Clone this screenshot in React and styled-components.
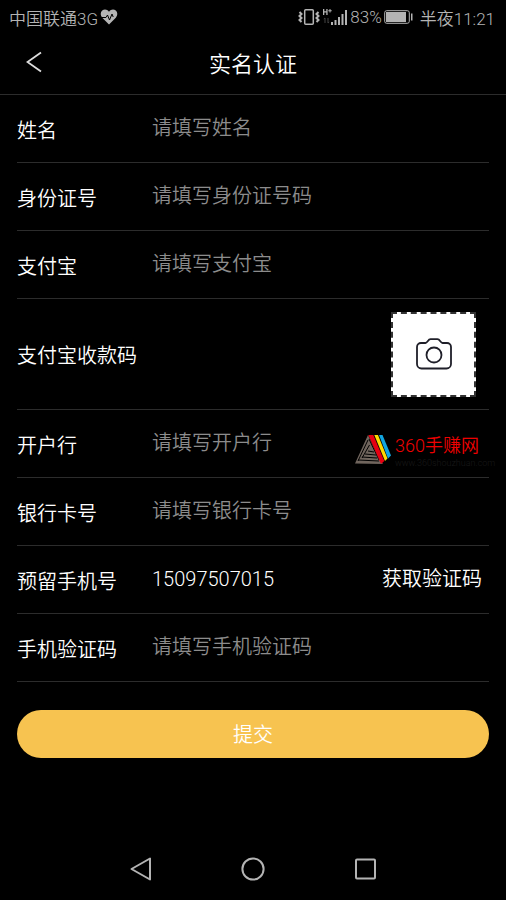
import React, { useState } from "react";
import styled, { createGlobalStyle } from "styled-components";

const FIELDS_BEFORE = [
  { id: "name", label: "姓名", placeholder: "请填写姓名" },
  { id: "idCard", label: "身份证号", placeholder: "请填写身份证号码" },
  { id: "alipay", label: "支付宝", placeholder: "请填写支付宝" },
];

const FIELDS_AFTER = [
  { id: "bank", label: "开户行", placeholder: "请填写开户行" },
  { id: "bankCard", label: "银行卡号", placeholder: "请填写银行卡号" },
  { id: "phone", label: "预留手机号", placeholder: "请填写手机号", action: "获取验证码" },
  { id: "code", label: "手机验证码", placeholder: "请填写手机验证码" },
];

const GlobalStyle = createGlobalStyle`
  *,
  *::before,
  *::after {
    box-sizing: border-box;
  }

  body {
    margin: 0;
    background-color: #000;
    color: #fff;
    font-family: Roboto, "Noto Sans CJK SC", sans-serif;
    font-weight: 350;
  }

  button,
  input {
    font: inherit;
    color: inherit;
    border: 0;
    padding: 0;
    background: none;
  }

  svg {
    display: block;
    flex-shrink: 0;
  }
`;

const HeartIcon = () => (
  <svg width="18" height="16" viewBox="0 0 18 16" fill="none">
    <path
      d="M9 15.5 2.2 8.7C.2 6.6.2 3.3 2.2 1.6 4.2 0 7.2.3 9 2.7 10.8.3 13.8 0 15.8 1.6c2 1.7 2 5 0 7.1z"
      fill="#b4b4b4"
    />
    <path d="M1 8.500h5l1.500-2.500 2 5 2.500-6 1.200 3" stroke="#000" />
  </svg>
);

const VibrateIcon = () => (
  <svg width="22" height="18" viewBox="0 0 22 18" fill="none" stroke="#b4b4b4">
    <rect x="6.7" y="1.7" width="8.600" height="14.600" rx="1" strokeWidth="1.500" />
    <path
      d="M1.500 4l2 2-2 2 2 2-2 2 2 2M20.500 4l-2 2 2 2-2 2 2 2-2 2"
      strokeWidth="2"
    />
  </svg>
);

const SignalIcon = () => (
  <svg width="26" height="18" viewBox="0 0 26 18" fill="#b4b4b4">
    <path d="M1 1h1.300v2.300h2V1h1.300v6H4.300V4.500h-2V7H1zM7.500 1h1v1.200h1.200v1H8.500v1.200h-1V3.200H6.300v-1h1.200z" />
    <path d="M3 10v5m-1.200-4L3 10M6 10v5m1.200-1L6 15" stroke="#444" fill="none" />
    <path d="M9 14h2v3H9zM12.500 12h2v5h-2zM16 9h2v8h-2zM19.500 6h2v11h-2zM23 2h2v15h-2z" />
  </svg>
);

const BatteryIcon = () => (
  <svg width="30" height="14" viewBox="0 0 30 14" fill="#b4b4b4">
    <rect x=".7" y=".7" width="24.600" height="12.600" rx="2" fill="none" stroke="#b4b4b4" />
    <path d="M2 2h20v10H2zM27 3.500h1.500v7H27z" />
  </svg>
);

const CameraIcon = () => (
  <svg width="38" height="34" viewBox="0 0 38 34" fill="none" stroke="#1f1f29" strokeWidth="1.800">
    <path
      d="M6 6h4.500c2 0 2.500-3.800 5-3.800h7c2.500 0 3 3.800 5 3.800H32a4 4 0 0 1 4 4v17a4.500 4.500 0 0 1-4.500 4.500h-25A4.500 4.500 0 0 1 2 27V10a4 4 0 0 1 4-4z"
      strokeLinejoin="round"
    />
    <circle cx="19" cy="18" r="7.500" />
  </svg>
);

const WatermarkLogo = () => (
  <svg width="37" height="32" viewBox="0 0 37 32">
    <path d="M13 2 24 26 28 31 0 30.500z" fill="#70655d" />
    <path
      d="M13 7 3 28M14.500 12 7 25M3 27l21 1M7 24l15 1M10 21l11 1M13 18l6 1M14 6l10 21"
      stroke="#000"
      fill="none"
    />
    <path d="M13.300 2h5l11 26-3.300 3z" fill="#e60012" />
    <path d="M19.300 2h3.700l9.500 23.500-2.500 2.500z" fill="#ffd900" />
    <path d="M24 2h3.500l8.500 20.500-3 3z" fill="#12a5e0" />
  </svg>
);

const StatusBar = () => (
  <StatusWrapper>
    <StatusGroup>
      中国联通3G
      <HeartIcon />
    </StatusGroup>
    <StatusGroup>
      <VibrateIcon />
      <SignalIcon />
      <span>83%</span>
      <BatteryIcon />
      <Clock>半夜11:21</Clock>
    </StatusGroup>
  </StatusWrapper>
);

const Field = ({ field, value, onChange }) => (
  <Row>
    <Label htmlFor={field.id}>{field.label}</Label>
    <Input
      id={field.id}
      value={value}
      placeholder={field.placeholder}
      onChange={(e) => onChange(field.id, e.target.value)}
    />
    {field.action && <CodeButton type="button">{field.action}</CodeButton>}
  </Row>
);

const App = () => {
  const [values, setValues] = useState({ phone: "15097507015" });

  const handleChange = (id, value) => setValues((prev) => ({ ...prev, [id]: value }));

  const renderField = (field) => (
    <Field key={field.id} field={field} value={values[field.id] || ""} onChange={handleChange} />
  );

  return (
    <Page>
      <GlobalStyle />
      <StatusBar />
      <Header>
        <BackButton type="button" aria-label="返回">
          <svg width="16" height="22" viewBox="0 0 16 22" fill="none" stroke="#ddd">
            <path d="M15 1.500 1.500 11 15 20.500" strokeWidth="1.800" />
          </svg>
        </BackButton>
        <Title>实名认证</Title>
      </Header>
      <Form onSubmit={(e) => e.preventDefault()}>
        {FIELDS_BEFORE.map(renderField)}
        <UploadRow>
          <span id="qrcode-label">支付宝收款码</span>
          <UploadButton type="button" aria-labelledby="qrcode-label">
            <CameraIcon />
          </UploadButton>
        </UploadRow>
        {FIELDS_AFTER.map(renderField)}
        <SubmitButton type="submit">提交</SubmitButton>
        <Watermark>
          <WatermarkLogo />
          <WatermarkText>
            <WatermarkName>360手赚网</WatermarkName>
            <WatermarkUrl>www.360shouzhuan.com</WatermarkUrl>
          </WatermarkText>
        </Watermark>
      </Form>
      <NavBar>
        <NavButton type="button" aria-label="后退">
          <svg width="24" height="26" viewBox="0 0 24 26" fill="none" stroke="#b4b4b4">
            <path d="M21 2.500v21L2.500 13z" strokeWidth="2" strokeLinejoin="round" />
          </svg>
        </NavButton>
        <NavButton type="button" aria-label="主页">
          <svg width="24" height="24" viewBox="0 0 24 24" fill="none" stroke="#b4b4b4">
            <circle cx="12" cy="12" r="10.600" strokeWidth="2" />
          </svg>
        </NavButton>
        <NavButton type="button" aria-label="最近任务">
          <svg width="24" height="24" viewBox="0 0 24 24" fill="none" stroke="#b4b4b4">
            <rect x="3" y="2.500" width="19" height="19" rx="1" strokeWidth="2" />
          </svg>
        </NavButton>
      </NavBar>
    </Page>
  );
};

const Page = styled.div`
  display: flex;
  flex-direction: column;
  min-height: 100vh;
`;

const StatusWrapper = styled.div`
  display: flex;
  justify-content: space-between;
  align-items: center;
  height: 34px;
  padding: 0 11px 0 9px;
  font-size: 17px;
  color: #b4b4b4;
`;

const StatusGroup = styled.div`
  display: flex;
  align-items: center;
  gap: 2px;
`;

const Clock = styled.span`
  margin-left: 4px;
`;

const Header = styled.header`
  display: grid;
  grid-template-columns: 52px 1fr 52px;
  align-items: center;
  height: 61px;
  padding-bottom: 4px;
  border-bottom: 1px solid #2c2c2c;
`;

const BackButton = styled.button`
  padding: 0 10px 0 26px;
`;

const Title = styled.h1`
  margin: 0;
  font-size: 22px;
  font-weight: inherit;
  text-align: center;
`;

const Form = styled.form`
  position: relative;
  flex: 1;
  padding: 0 17px;
  font-size: 20px;
`;

const Row = styled.div`
  display: flex;
  align-items: center;
  height: 68px;
  padding-bottom: 2px;
  border-bottom: 1px solid #2c2c2c;
`;

const UploadRow = styled(Row)`
  justify-content: space-between;
  height: 111px;
  padding: 0 13px 0 0;
`;

const Label = styled.label`
  min-width: 135px;
  padding-top: 4px;
`;

const Input = styled.input`
  flex: 1;
  min-width: 0;
  height: 40px;
  outline: none;

  &::placeholder {
    color: #8c8c8c;
    opacity: 1;
  }
`;

const CodeButton = styled.button`
  padding: 0 7px 2px 0;
`;

const UploadButton = styled.button`
  display: grid;
  place-items: center;
  width: 85px;
  height: 85px;
  border: 2px dashed #333;
  background-color: #fff;
`;

const SubmitButton = styled.button`
  width: 100%;
  height: 48px;
  margin-top: 28px;
  padding-bottom: 2px;
  border-radius: 24px;
  background-color: #f7c350;
`;

const Watermark = styled.div`
  position: absolute;
  top: 338px;
  right: 6px;
  display: flex;
  gap: 3px;
  pointer-events: none;
`;

const WatermarkText = styled.div`
  display: flex;
  flex-direction: column;
  width: 105px;
`;

const WatermarkName = styled.span`
  font-size: 18px;
  line-height: 26px;
  color: #f00000;
`;

const WatermarkUrl = styled.span`
  font-size: 9px;
  line-height: 8px;
  color: #181818;
`;

const NavBar = styled.nav`
  display: flex;
  justify-content: center;
  gap: 88px;
  height: 62px;
`;

const NavButton = styled.button`
  display: grid;
  place-items: center;
  width: 24px;
`;

export default App;
